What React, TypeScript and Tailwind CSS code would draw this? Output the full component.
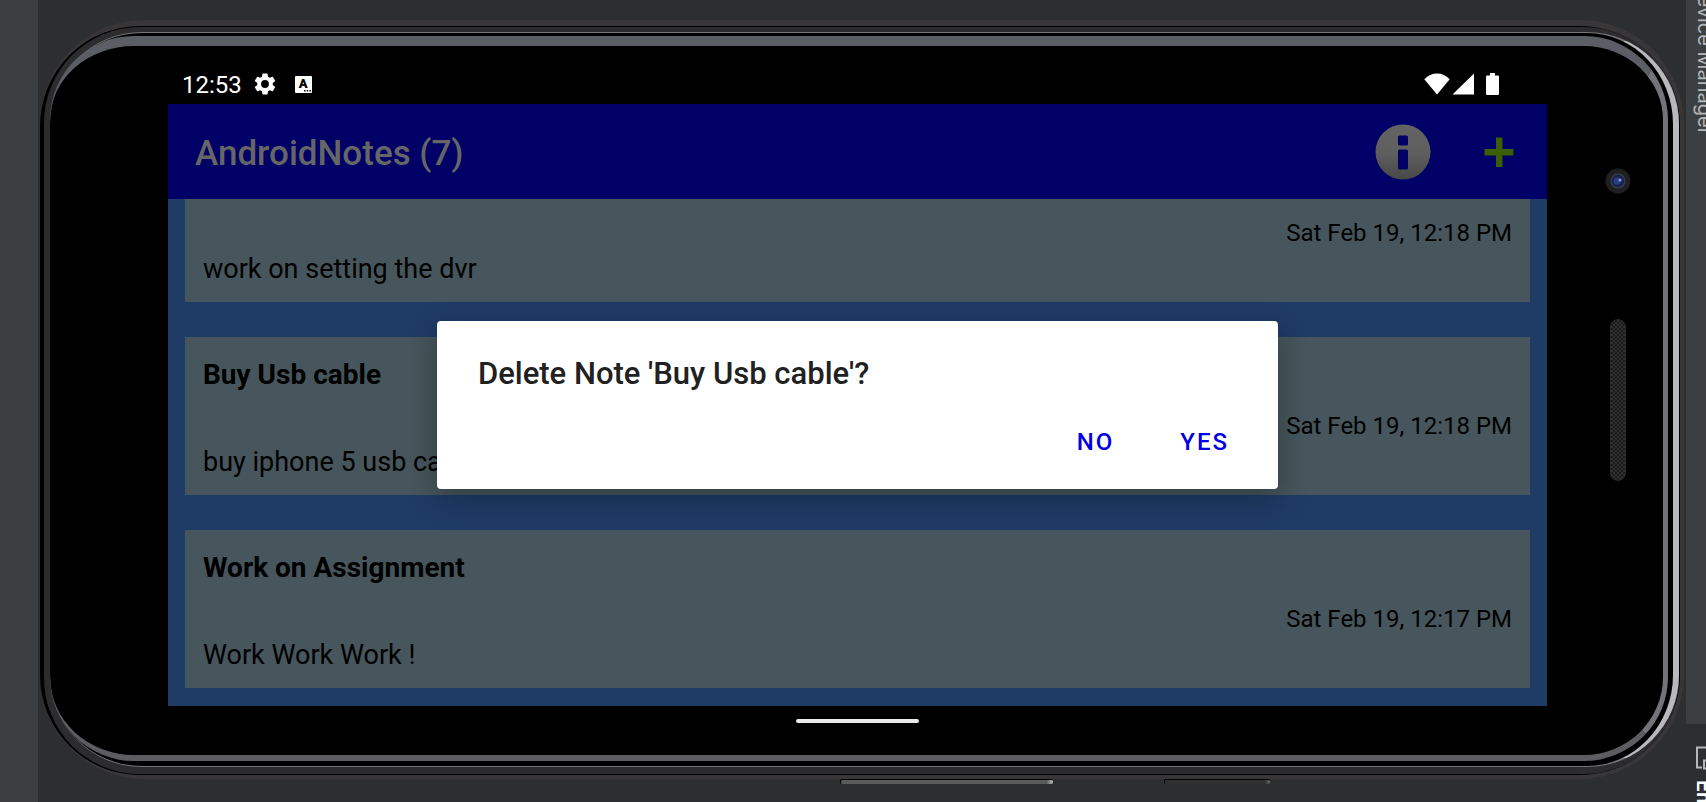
import React from "react";

type Note = { title: string; date: string; body: string };

const notes: Note[] = [
  { title: "", date: "Sat Feb 19, 12:18 PM", body: "work on setting the dvr" },
  { title: "Buy Usb cable", date: "Sat Feb 19, 12:18 PM", body: "buy iphone 5 usb cable" },
  { title: "Work on Assignment", date: "Sat Feb 19, 12:17 PM", body: "Work Work Work !" },
];

function GearIcon() {
  return (
    <svg viewBox="0 0 24 24" className="size-[26px]" fill="#fff" aria-hidden="true">
      <path d="M19.14 12.94c.04-.3.06-.61.06-.94 0-.32-.02-.64-.07-.94l2.03-1.58a.49.49 0 0 0 .12-.61l-1.92-3.32a.49.49 0 0 0-.59-.22l-2.39.96c-.5-.38-1.03-.7-1.62-.94l-.36-2.54a.48.48 0 0 0-.48-.41h-3.84c-.24 0-.43.17-.47.41l-.36 2.54c-.59.24-1.13.57-1.62.94l-2.39-.96a.48.48 0 0 0-.59.22L2.74 8.87c-.12.21-.08.47.12.61l2.03 1.58c-.05.3-.09.63-.09.94s.02.64.07.94l-2.03 1.58a.49.49 0 0 0-.12.61l1.92 3.32c.12.22.37.29.59.22l2.39-.96c.5.38 1.03.7 1.62.94l.36 2.54c.05.24.24.41.48.41h3.84c.24 0 .44-.17.47-.41l.36-2.54c.59-.24 1.13-.56 1.62-.94l2.39.96c.22.08.47 0 .59-.22l1.92-3.32a.48.48 0 0 0-.12-.61l-2.01-1.58zM12 15.6A3.6 3.6 0 1 1 12 8.4a3.6 3.6 0 0 1 0 7.2z" />
    </svg>
  );
}

function StatusBar() {
  return (
    <div className="flex h-[44px] items-center pl-[14px] pr-[48px] pt-[4px]">
      <span className="mr-[10px] pt-[2px] text-[24px] leading-[30px] text-white">12:53</span>
      <GearIcon />
      <span className="relative ml-[17px] flex size-[17px] justify-center rounded-[1px] bg-white text-[13px] font-black leading-[15px] text-black">
        A
        <svg viewBox="0 0 7 2" className="absolute bottom-px right-px h-[2px] w-[7px]" aria-hidden="true">
          <path d="M0 0h1.5v1.5H0zM2.7 0h1.5v1.5H2.7zM5.4 0h1.5v1.5H5.4z" fill="#000" />
        </svg>
      </span>
      <div className="ml-auto flex items-center gap-[2px]">
        <svg viewBox="0 0 26 22" className="h-[22px] w-[26px]" fill="#fff" aria-hidden="true">
          <path d="M0.3 6.2C4 2.4 8.200 0.500 13 0.500S22 2.400 25.700 6.200L13 21.500z" />
        </svg>
        <svg viewBox="0 0 22 22" className="h-[22px] w-[22px]" fill="#fff" aria-hidden="true">
          <path d="M22 0.500V21.500H0.500z" />
        </svg>
        <svg viewBox="0 0 13 22" className="ml-[10px] h-[22px] w-[13px]" fill="#fff" aria-hidden="true">
          <path d="M4 0h5v2.500h2.700A1.300 1.300 0 0 1 13 3.800V20.700A1.300 1.300 0 0 1 11.700 22H1.300A1.300 1.300 0 0 1 0 20.700V3.800A1.300 1.300 0 0 1 1.300 2.500H4z" />
        </svg>
      </div>
    </div>
  );
}

function AppBar() {
  return (
    <header className="flex h-[95px] shrink-0 items-center bg-[#000066] pl-[27px] pr-[33px]">
      <h1 className="pt-[4px] text-[35px] font-medium leading-[40px] text-[#666666]">AndroidNotes (7)</h1>
      <div className="ml-auto flex items-center gap-[53px]">
        <button type="button" aria-label="About">
          <svg viewBox="0 0 56 56" className="size-[56px]" aria-hidden="true">
            <defs>
              <linearGradient id="info" x1="0" y1="0" x2="0" y2="1">
                <stop offset="0" stopColor="#636363" />
                <stop offset="0.5" stopColor="#5f5f5f" />
                <stop offset="1" stopColor="#484848" />
              </linearGradient>
            </defs>
            <circle cx="28" cy="28" r="27.500" fill="url(#info)" />
            <rect x="23" y="11.500" width="10" height="10" rx="1.500" fill="#000066" />
            <rect x="23" y="25.500" width="10" height="20" rx="1.500" fill="#000066" />
          </svg>
        </button>
        <button type="button" aria-label="Add note">
          <svg viewBox="0 0 30 30" className="size-[30px]" aria-hidden="true">
            <path d="M12 0.500h6.500v11.500h11v6.500h-11v11.500h-6.500v-11.500H0.500v-6.500H12z" fill="#3a5e00" />
          </svg>
        </button>
      </div>
    </header>
  );
}

function NoteCard({ note }: { note: Note }) {
  return (
    <li className="shrink-0 bg-[#46565c] px-[18px] pb-[14px] pt-[18px] text-black">
      <h2 className="h-[40px] text-[28px] font-bold leading-[40px]">{note.title}</h2>
      <p className="mt-[14px] text-right text-[24px] leading-[34px]">{note.date}</p>
      <p className="text-[27px] leading-[38px]">{note.body}</p>
    </li>
  );
}

function DeleteDialog() {
  return (
    <div className="absolute inset-0 flex items-center justify-center">
      <div
        role="dialog"
        aria-labelledby="dialog-title"
        className="w-[61%] rounded-[4px] bg-white pb-[17px] pl-[41px] pr-[49px] pt-[33px] shadow-[0_10px_30px_rgba(0,0,0,0.3)]"
      >
        <h2 id="dialog-title" className="text-[31px] font-medium leading-[40px] text-[#212121]">
          Delete Note 'Buy Usb cable'?
        </h2>
        <div className="mt-[18px] flex justify-end gap-[66px] text-[24px] font-medium leading-[30px] tracking-[2px] text-[#0000e6]">
          <button type="button" className="py-[15px]">NO</button>
          <button type="button" className="py-[15px]">YES</button>
        </div>
      </div>
    </div>
  );
}

function Phone() {
  return (
    <div className="relative mb-[23px] ml-[2px] mt-[20px] flex-1">
      <div className="h-full rounded-[104px] bg-[#393637] pb-[4px] pr-[4px] pt-[6px]">
        <div className="h-full rounded-[100px] bg-black pb-px pl-[4px] pr-px pt-px">
          <div className="h-full rounded-[96px] bg-[#2c2c2e] pb-[7px] pl-[6px] pt-[5px]">
            <div className="h-full rounded-[92px] border-b border-r-[6px] border-t border-b-[#77777b] border-r-[#b8b8bd] border-t-[#77777b] bg-black pb-[5px] pr-[5px] pt-[3px]">
              <div className="h-full rounded-[84px] border-b-[6px] border-r-[5px] border-t-[10px] border-b-[#5c5c61] border-r-[#73747a] border-t-[#5b5e65]">
                <div className="flex pl-[118px] pt-[14px]">
                  <div className="flex-1">
                    <StatusBar />
                    <main className="relative bg-[#1f3c66]">
                      <AppBar />
                      <ul className="flex h-[507px] flex-col justify-end gap-[35px] overflow-hidden px-[17px] pb-[18px]">
                        {notes.map((n, i) => (
                          <NoteCard key={i} note={n} />
                        ))}
                      </ul>
                      <DeleteDialog />
                    </main>
                    <div className="mx-auto mt-[13px] h-[4px] w-[123px] rounded-full bg-[#ece9ec]" />
                  </div>
                  <div className="flex w-[116px] flex-col items-center pl-[25px] pt-[108px]">
                    <Camera />
                    <div className="mt-[125px] h-[162px] w-[16px] rounded-full border border-[#2a2a2a] bg-[repeating-conic-gradient(#303030_0_25%,#1a1a1a_0_50%)] bg-[length:4px_4px]" />
                  </div>
                </div>
              </div>
            </div>
          </div>
        </div>
      </div>
      <div className="absolute -bottom-[5px] left-[800px] h-[5px] w-[213px] rounded-[2px] border-l border-t border-black bg-[linear-gradient(90deg,#5a5a5a_97%,#c0c0c0)]" />
      <div className="absolute -bottom-[5px] left-[1124px] h-[5px] w-[106px] rounded-[2px] border-l border-t border-black bg-[linear-gradient(90deg,#303030_95%,#6a6a6a)]" />
    </div>
  );
}

function Camera() {
  return (
    <svg viewBox="0 0 26 26" className="size-[26px]" aria-hidden="true">
      <circle cx="13" cy="13" r="12.500" fill="#1f1f20" />
      <circle cx="13" cy="13" r="7.500" fill="#3d4357" />
      <circle cx="13" cy="13" r="6.500" fill="#17244f" />
      <circle cx="12" cy="13" r="3.500" fill="#2a3f80" />
      <circle cx="15" cy="12" r="1.500" fill="#8b9cd0" />
    </svg>
  );
}

function ToolStripe() {
  return (
    <aside className="flex w-[20px] shrink-0 flex-col overflow-hidden bg-[#3c3f41] font-['Inter',sans-serif]">
      <div className="flex h-[724px] shrink-0 items-start">
        <a
          href="#device-manager"
          className="-mt-[19px] ml-[7px] w-[24px] shrink-0 whitespace-nowrap text-[20px] leading-[24px] text-[#b4b6b8] [writing-mode:vertical-rl]"
        >
          Device Manager
        </a>
      </div>
      <div className="flex-1 bg-[#2d2e30]">
        <a href="#emulator" className="flex flex-col items-start pl-[6px] pt-[22px] text-white">
          <svg viewBox="0 0 22 24" className="ml-[4px] h-[24px] w-[22px] shrink-0" fill="none" stroke="#b4b6b8" strokeWidth="2" aria-hidden="true">
            <path d="M18 1.500H1V21.500H6M8 14.500h6v8H8z" />
          </svg>
          <span className="mt-[10px] w-[24px] shrink-0 whitespace-nowrap text-[20px] font-semibold leading-[24px] [writing-mode:vertical-rl]">
            Emulator
          </span>
        </a>
      </div>
    </aside>
  );
}

export default function App() {
  return (
    <div className="flex h-screen min-h-[802px] overflow-hidden bg-[#2d2e30] font-['Roboto',sans-serif]">
      <div className="w-[38px] shrink-0 bg-[#3c3f41]" />
      <Phone />
      <div className="w-[2px] shrink-0" />
      <ToolStripe />
    </div>
  );
}
